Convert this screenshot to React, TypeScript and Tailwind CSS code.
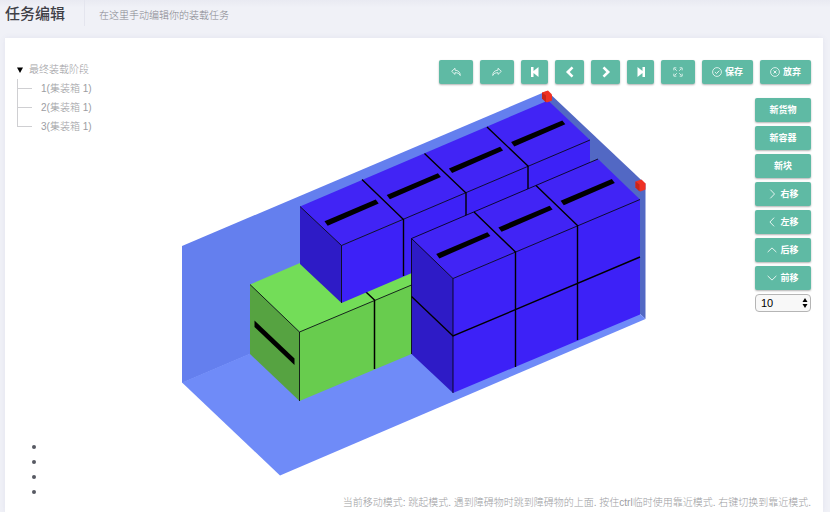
import type { ReactNode } from "react";

const box = "flex h-6 shrink-0 items-center justify-center gap-[3px] rounded-[2px] bg-[#5fbaa4] text-[9px] leading-3 font-bold text-white shadow-[0_1px_2px_rgba(0,0,0,0.3)]";

function Icon({ children, size = "size-[10px]", weight = 1 }: { children: ReactNode; size?: string; weight?: number }) {
  return (
    <svg viewBox="0 0 12 12" className={`${size} shrink-0`} fill="none" stroke="currentColor" strokeWidth={weight} aria-hidden="true">
      {children}
    </svg>
  );
}

const replyPath = "M4.8 1.5.8 5.2l4 3.700V6.800c2.900 0 4.900.7 6.300 3.400.1-3.800-2.400-6.200-6.300-6.400z";

const tools: { label: string; width: string; text?: string; icon: ReactNode }[] = [
  { label: "撤销", width: "w-[34px]", icon: <Icon><path d={replyPath} strokeWidth=".9" /></Icon> },
  { label: "重做", width: "w-[34px]", icon: <Icon><path d={replyPath} strokeWidth=".9" transform="translate(12 0) scale(-1 1)" /></Icon> },
  { label: "第一步", width: "w-[27px]", icon: <Icon size="size-3"><path d="M2 1h2.500v4L9.500 1v10l-5-4v4H2z" fill="currentColor" stroke="none" /></Icon> },
  { label: "上一步", width: "w-[29px]", icon: <Icon size="size-3" weight={2.6}><path d="M8.500 1.300 3.800 6l4.700 4.700" /></Icon> },
  { label: "下一步", width: "w-[29px]", icon: <Icon size="size-3" weight={2.6}><path d="M3.500 1.300 8.200 6l-4.700 4.700" /></Icon> },
  { label: "最后一步", width: "w-[27px]", icon: <Icon size="size-3"><path d="M10 1H7.500v4l-5-4v10l5-4v4H10z" fill="currentColor" stroke="none" /></Icon> },
  {
    label: "全屏",
    width: "w-[34px]",
    icon: <Icon><path d="M1 4V1h3M8 1h3v3M11 8v3H8M4 11H1V8M2.2 2.2l2.300 2.300M9.800 2.200 7.500 4.500M9.800 9.800 7.500 7.500M2.200 9.800l2.300-2.300" strokeWidth=".9" /></Icon>,
  },
  { label: "保存", text: "保存", width: "w-[51px]", icon: <Icon><circle cx="6" cy="6" r="5.3" strokeWidth=".9" /><path d="m3.5 6 1.9 1.9 3.3-3.5" /></Icon> },
  { label: "放弃", text: "放弃", width: "w-[51px]", icon: <Icon><circle cx="6" cy="6" r="5.3" strokeWidth=".9" /><path d="m4.2 4.2 3.6 3.6M7.8 4.2 4.2 7.8" /></Icon> },
];

const actions: { text: string; path?: string }[] = [
  { text: "新货物" },
  { text: "新容器" },
  { text: "新块" },
  { text: "右移", path: "M4 .8 9 6l-5 5.200" },
  { text: "左移", path: "M8.500.8 3.500 6l5 5.200" },
  { text: "后移", path: "M.8 8.500 6 3.500l5.200 5" },
  { text: "前移", path: "M.8 3.500 6 8.500l5.200-5" },
];

const steps = ["1(集装箱 1)", "2(集装箱 1)", "3(集装箱 1)"];

function Marker({ x, y }: { x: number; y: number }) {
  return (
    <g transform={`translate(${x} ${y})`}>
      <path d="M-5-4 1-6 5-2V4L0 6-5 2z" fill="#ef3124" />
      <path d="M-5-4-1-1V6L-5 2z" fill="#c8251c" />
    </g>
  );
}

function Scene() {
  return (
    <svg viewBox="182 90 464 386" className="h-auto w-[464px] min-w-0" role="img" aria-label="装载视图">
      <path d="M182 246 547 91V228L182 383z" fill="#647fee" />
      <path d="M547 91 645.5 184V319L547 227z" fill="#5268c4" />
      <path d="M182 382.5 547 227l98.5 92L280 475.5z" fill="#6f8bf8" />

      <path d="M250 284.5 411.5 215V285L299.5 332z" fill="#73dd58" />
      <path d="M250 284.5 299.5 332V401L250 354z" fill="#56a341" />
      <path d="M299.5 332 411.5 285V354L299.5 401z" fill="#68cc4e" />
      <g fill="none" stroke="#000">
        <path d="M250 284.5 299.5 332 411.5 285M299.5 332V401" strokeWidth=".8" />
        <path d="M350 277 374.5 300V369" strokeWidth="1.5" />
      </g>
      <path d="M254.5 320.5l40 38v6.5l-40-38z" />

      <path d="M300 206.5 548 100.5 590 140 341.5 245.5z" fill="#4124f5" />
      <path d="M300 206.5 341.5 245.5V303L300 264z" fill="#2e1bc6" />
      <path d="M341.5 245.5 590 140V197L341.5 303z" fill="#3d21f7" />
      <g fill="none" stroke="#000">
        <path d="M300 206.5 341.5 245.5 590 140M341.5 245.5V303" strokeWidth=".8" />
        <path d="M362 179.5 403.5 219.5V276M424.5 153.5 466 193V250M487 127 528 166V223" strokeWidth="1.4" />
      </g>
      {[0, 1, 2, 3].map((i) => (
        <path key={i} d="M324.5 221.3 375.7 199.6l3 3.8-51 22.3z" transform={`translate(${i * 62.2} ${i * -26.4})`} />
      ))}

      <path d="M411.5 238.5 598 159 640 199.5 453 278.5z" fill="#4124f5" />
      <path d="M411.5 238.5 453 278.5V393L411.5 354z" fill="#2e1bc6" />
      <path d="M453 278.5 640 199.5V314.5L453 393z" fill="#3d21f7" />
      <g fill="none" stroke="#000">
        <path d="M411.5 354V238.5L453 278.5 640 199.5M411.5 238.5 598 159M453 278.5V393" strokeWidth=".8" />
        <path d="M411.5 296.5 453 336 640 257M474 212 515.5 252V367M536 185.5 577.5 225.5V340" strokeWidth="1.4" />
      </g>
      {[0, 1, 2].map((i) => (
        <path key={i} d="M436.2 254 487.4 232.3l3 3.8-51 22.3z" transform={`translate(${i * 62.2} ${i * -26.6})`} />
      ))}

      <Marker x={547} y={96.5} />
      <Marker x={640.5} y={185.5} />
    </svg>
  );
}

export default function App() {
  return (
    <div className="flex min-h-screen flex-col bg-[#f0f1f7] font-['Liberation_Sans','Noto_Sans_CJK_SC',sans-serif] text-[10px] leading-4 font-light text-[#9c9da2]">
      <header className="flex h-[38px] items-start bg-linear-to-b from-[#e9eaf2] to-[#f0f1f7] to-20% pl-[5px]">
        <h1 className="w-20 border-r border-[#e4e5ee] pt-0.5 text-[15px] leading-6 font-medium text-[#3f4047]">任务编辑</h1>
        <p className="pt-2 pl-[14px] text-[#85868d]">在这里手动编辑你的装载任务</p>
      </header>

      <main className="mr-[7px] ml-[5px] flex flex-1 flex-col bg-white px-3 pt-[22px] shadow-[0_0_6px_rgba(80,80,140,0.08)]">
        <div className="flex">
          <aside className="flex w-[165px] shrink-0 flex-col justify-between">
            <details open>
              <summary className="flex list-none items-center gap-1.5 pt-0.5">
                <svg viewBox="0 0 6 6" className="size-1.5" aria-hidden="true"><path d="M0 .5h6L3 6z" fill="#000" /></svg>
                最终装载阶段
              </summary>
              <ul className="pt-px">
                {steps.map((step) => (
                  <li key={step} className="flex h-[19px]">
                    <span className="h-[10px] w-[15px] border-b border-l border-[#cfcfd2] [li:not(:first-child)>&]:-mt-[9px] [li:not(:first-child)>&]:h-[19px]" />
                    <span className="pt-0.5 pl-[9px]">{step}</span>
                  </li>
                ))}
              </ul>
            </details>
            <ul className="flex flex-col text-[#575962]">
              {[1, 2, 3, 4].map((n) => (
                <li key={n} className="flex h-[15px] items-center pl-[15px]"><span className="size-1 rounded-full bg-current" /></li>
              ))}
            </ul>
          </aside>

          <section className="min-w-0 flex-1">
            <div className="flex justify-end gap-[7px]">
              {tools.map((tool) => (
                <button key={tool.label} type="button" aria-label={tool.label} className={`${box} ${tool.width}`}>
                  {tool.icon}
                  {tool.text}
                </button>
              ))}
            </div>
            <div className="flex items-start justify-between pt-1.5 pb-[23px]">
              <Scene />
              <div className="flex w-14 shrink-0 flex-col gap-1 pt-2">
                {actions.map((action) => (
                  <button key={action.text} type="button" className={box}>
                    {action.path && <Icon><path d={action.path} /></Icon>}
                    {action.text}
                  </button>
                ))}
                <div className="relative">
                  <select aria-label="移动距离" defaultValue="10" className="block h-[18px] w-full appearance-none rounded-sm border border-[#b5b5b5] bg-[#f8f8f8] pl-[5px] text-[11px] leading-4 font-normal text-black">
                    <option>10</option>
                    <option>50</option>
                    <option>100</option>
                  </select>
                  <svg viewBox="0 0 6 10" className="pointer-events-none absolute top-1 right-[3px] h-[10px] w-1.5" aria-hidden="true"><path d="M.5 4 3 0l2.5 4zM.5 6h5L3 10z" fill="#000" /></svg>
                </div>
              </div>
            </div>
          </section>
        </div>
        <p className="-mt-1 text-right">当前移动模式: 跳起模式. 遇到障碍物时跳到障碍物的上面. 按住ctrl临时使用靠近模式. 右键切换到靠近模式.</p>
      </main>
    </div>
  );
}
